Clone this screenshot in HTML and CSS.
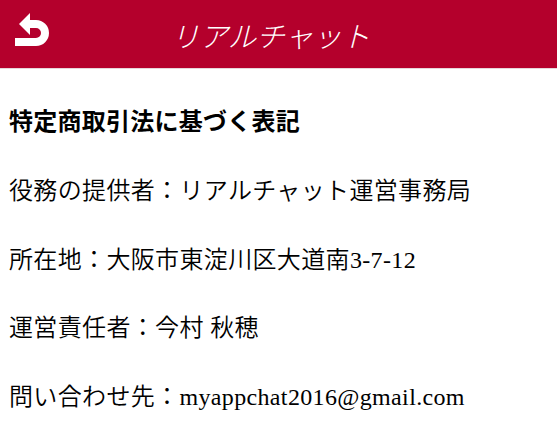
FILE: index.html
```html
<!DOCTYPE html>
<html lang="ja">
<head>
<meta charset="utf-8">
<link rel="stylesheet" href="styles.css">
</head>
<body>
<header class="bar">
  <div class="back">
    <svg width="40" height="40" viewBox="0 0 40 40">
      <path d="M28 24 H36 A9 9 0 0 1 36 42 H15" transform="translate(-10 -10)" fill="none" stroke="#fff" stroke-width="8"/>
      <polygon points="9,14 20,3 20,25" fill="#fff"/>
    </svg>
  </div>
  <h1 class="title">リアルチャット</h1>
</header>
<main class="content">
  <div class="row heading">特定商取引法に基づく表記</div>
  <div class="row">役務の提供者：リアルチャット運営事務局</div>
  <div class="row">所在地：大阪市東淀川区大道南3-7-12</div>
  <div class="row">運営責任者：今村 秋穂</div>
  <div class="row">問い合わせ先：myappchat2016@gmail.com</div>
</main>
</body>
</html>
```
FILE: styles.css
```css
html, body {
  margin: 0;
  padding: 0;
  background: #fff;
}
body {
  width: 557px;
  height: 430px;
  overflow: hidden;
  font-family: "Liberation Serif", "Noto Sans CJK JP", serif;
  color: #000;
}
.bar {
  height: 68px;
  background: #b4002c;
  border-bottom: 1px solid #e6d6da;
  display: flex;
  align-items: center;
  position: relative;
}
.back {
  position: absolute;
  left: 10px;
  top: 10px;
  width: 40px;
  height: 40px;
}
.back svg {
  display: block;
}
.title {
  margin: 0;
  flex: 1;
  text-align: center;
  font-family: "Noto Sans CJK JP", sans-serif;
  font-weight: 300;
  font-style: italic;
  font-size: 28.5px;
  color: #fff;
  padding-right: 16px;
}
.content {
  padding: 19px 0 0 9px;
  display: flex;
  flex-direction: column;
}
.row {
  font-size: 24px;
  font-weight: 350;
  letter-spacing: 0.35px;
  line-height: 68.75px;
  height: 68.75px;
  white-space: nowrap;
}
.heading {
  font-weight: 700;
  letter-spacing: 0.25px;
}
```
